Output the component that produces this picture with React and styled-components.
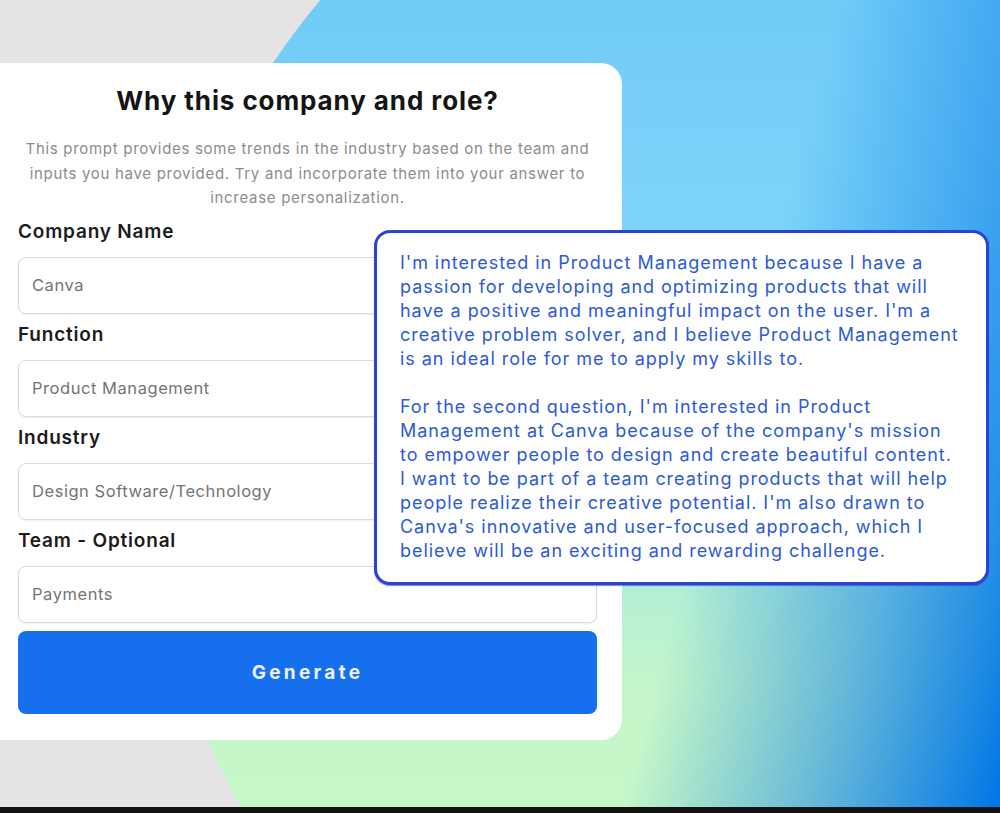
import React from "react";
import styled, { createGlobalStyle } from "styled-components";

const Global = createGlobalStyle`
  html, body { margin: 0; padding: 0; }
  body {
    width: 1000px;
    height: 813px;
    overflow: hidden;
    background: #e4e4e4;
    font-family: Inter, "Noto Sans", "Liberation Sans", sans-serif;
  }
  * { box-sizing: border-box; }
`;

const Page = styled.div`
  width: 1000px;
  height: 813px;
  display: grid;
  grid-template-rows: 807px 6px;
`;

const Stage = styled.div`
  position: relative;
  display: grid;
  overflow: hidden;
  background: #e4e4e4;
  > * { grid-area: 1 / 1; }
`;

const Backdrop = styled.svg`
  width: 1000px;
  height: 807px;
  display: block;
`;

const Content = styled.div`
  padding-top: 63px;
  display: flex;
  align-items: flex-start;
`;

const Card = styled.section`
  width: 622px;
  background: #ffffff;
  border-radius: 0 21px 21px 0;
  padding: 22px 25px 26px 18px;
  display: flex;
  flex-direction: column;
`;

const Title = styled.h1`
  margin: 0;
  text-align: center;
  font-size: 26px;
  line-height: 32px;
  font-weight: 700;
  color: #141414;
  letter-spacing: 0.9px;
`;

const Subtitle = styled.p`
  margin: 20px 0 0;
  text-align: center;
  font-size: 15px;
  line-height: 24.5px;
  color: #8c8c8c;
  letter-spacing: 0.7px;
  white-space: nowrap;
`;

const Field = styled.div`
  display: flex;
  flex-direction: column;
`;

const Label = styled.label`
  margin: 9px 0 13px;
  font-size: 19px;
  line-height: 24px;
  font-weight: 600;
  color: #1b1b1b;
  letter-spacing: 0.8px;
`;

const Input = styled.div`
  height: 57px;
  border: 1px solid #dadada;
  border-radius: 8px;
  box-shadow: 0 1px 2px rgba(0, 0, 0, 0.07);
  padding: 0 13px;
  display: flex;
  align-items: center;
  font-size: 16.5px;
  letter-spacing: 0.55px;
  color: #747474;
`;

const Button = styled.button`
  margin-top: 8px;
  height: 83px;
  border: none;
  border-radius: 8px;
  background: #1670ee;
  color: #eef3fd;
  font-family: inherit;
  font-size: 19px;
  font-weight: 700;
  letter-spacing: 3.3px;
  cursor: pointer;
`;

const Answer = styled.div`
  position: absolute;
  left: 374px;
  top: 230px;
  width: 615px;
  height: 355px;
  background: #ffffff;
  border: 3px solid #2944d3;
  border-radius: 16px;
  box-shadow: 0 1px 1px rgba(30, 50, 190, 0.6);
  padding: 18px 20px 0 23px;
  color: #2d5ad6;
  font-size: 18px;
  line-height: 24px;
  letter-spacing: 0.95px;
  white-space: nowrap;
`;

const Para = styled.p`
  margin: 0 0 24px;
`;

const Strip = styled.div`
  background: #111111;
`;

const fields = [
  ["Company Name", "Canva"],
  ["Function", "Product Management"],
  ["Industry", "Design Software/Technology"],
  ["Team - Optional", "Payments"],
];

export default function App() {
  return (
    <Page>
      <Global />
      <Stage>
        <Backdrop viewBox="0 0 1000 807" aria-hidden="true">
          <defs>
            <linearGradient id="base" gradientUnits="userSpaceOnUse" x1="0" y1="0" x2="0" y2="807">
              <stop offset="0" stopColor="#70cbf7" />
              <stop offset="0.3" stopColor="#7dd5f8" />
              <stop offset="0.55" stopColor="#8bdcf2" />
              <stop offset="0.72" stopColor="#b2eed6" />
              <stop offset="0.85" stopColor="#c4f6c9" />
              <stop offset="1" stopColor="#c5f7c8" />
            </linearGradient>
            <linearGradient id="blue" gradientUnits="userSpaceOnUse" x1="784" y1="210" x2="1133" y2="304">
              <stop offset="0" stopColor="#0077e6" stopOpacity="0" />
              <stop offset="0.5" stopColor="#0a7ce8" stopOpacity="0.5" />
              <stop offset="1" stopColor="#0077e6" stopOpacity="1" />
            </linearGradient>
          </defs>
          <circle cx="870" cy="462" r="718" fill="url(#base)" />
          <circle cx="870" cy="462" r="718" fill="url(#blue)" />
        </Backdrop>
        <Content>
          <Card>
            <Title>Why this company and role?</Title>
            <Subtitle>
              This prompt provides some trends in the industry based on the team and
              <br />
              inputs you have provided. Try and incorporate them into your answer to
              <br />
              increase personalization.
            </Subtitle>
            {fields.map(([label, value]) => (
              <Field key={label}>
                <Label>{label}</Label>
                <Input>{value}</Input>
              </Field>
            ))}
            <Button>Generate</Button>
          </Card>
        </Content>
        <Answer>
          <Para>
            I'm interested in Product Management because I have a
            <br />
            passion for developing and optimizing products that will
            <br />
            have a positive and meaningful impact on the user. I'm a
            <br />
            creative problem solver, and I believe Product Management
            <br />
            is an ideal role for me to apply my skills to.
          </Para>
          <Para>
            For the second question, I'm interested in Product
            <br />
            Management at Canva because of the company's mission
            <br />
            to empower people to design and create beautiful content.
            <br />
            I want to be part of a team creating products that will help
            <br />
            people realize their creative potential. I'm also drawn to
            <br />
            Canva's innovative and user-focused approach, which I
            <br />
            believe will be an exciting and rewarding challenge.
          </Para>
        </Answer>
      </Stage>
      <Strip />
    </Page>
  );
}
